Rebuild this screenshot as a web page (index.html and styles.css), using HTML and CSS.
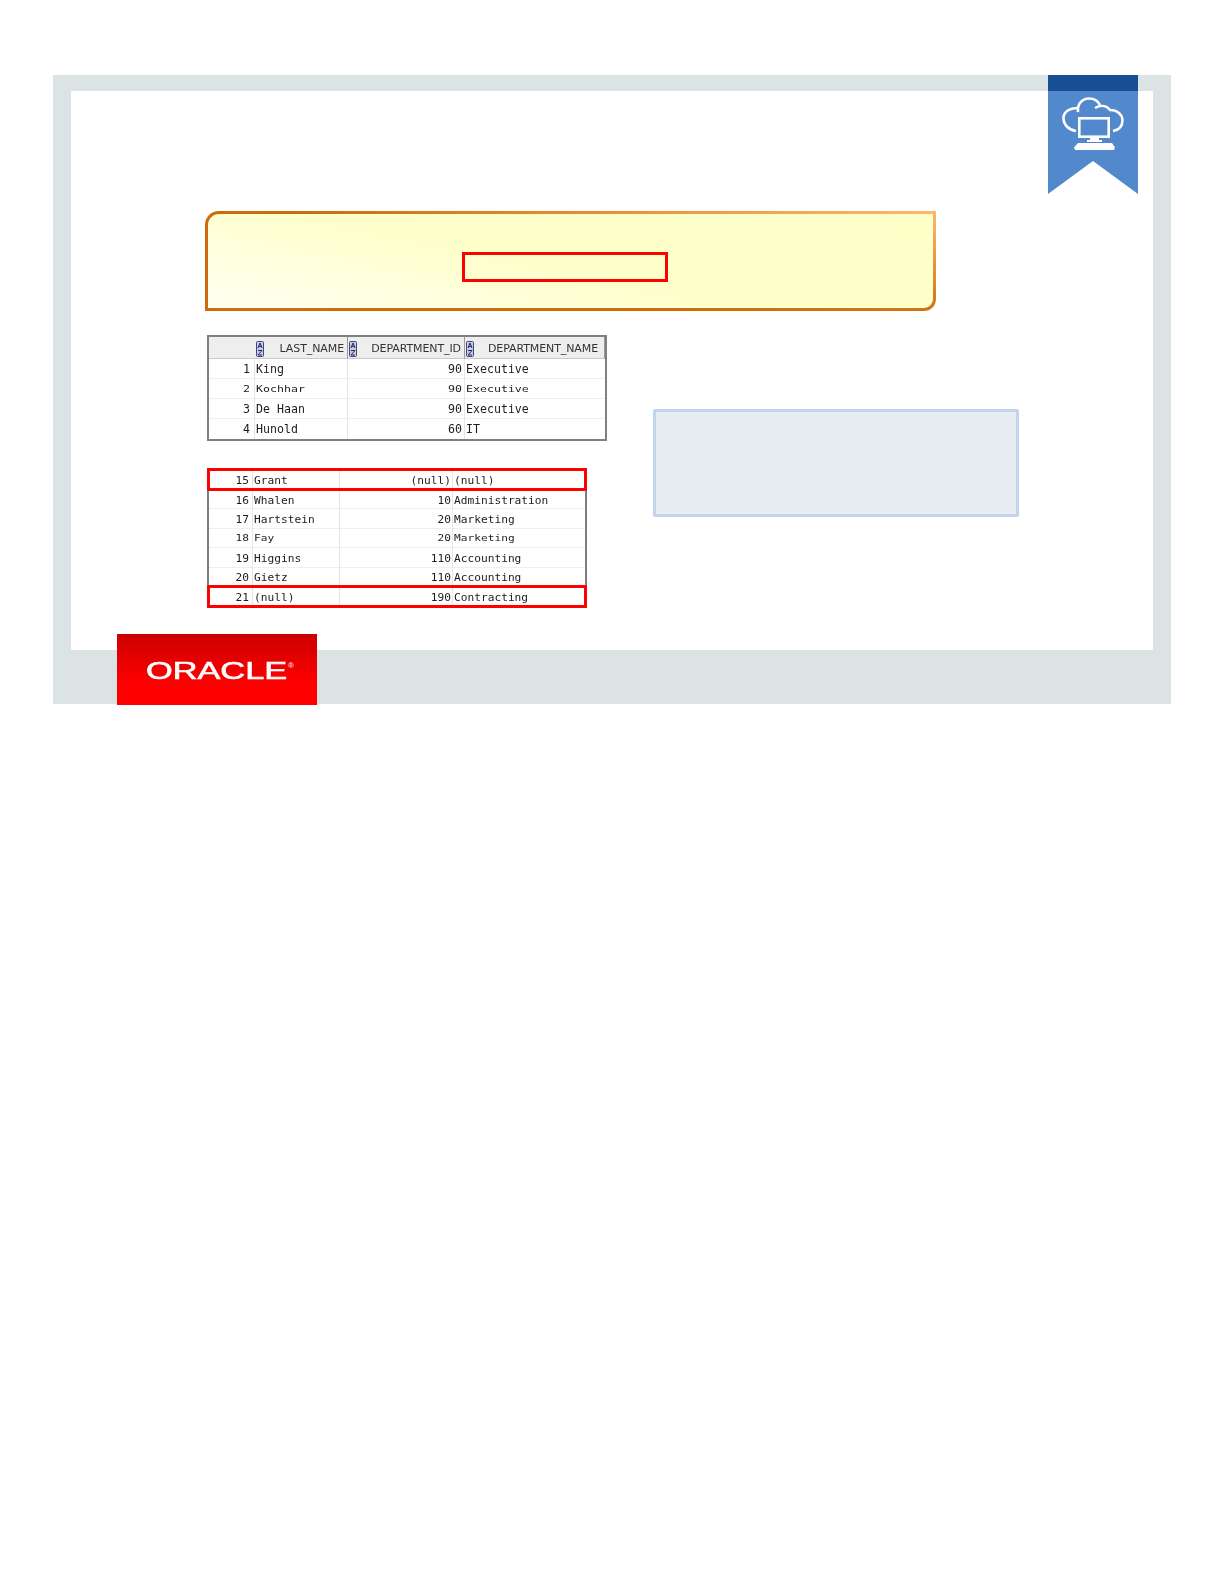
FILE: index.html
```html
<!DOCTYPE html>
<html lang="en">
<head>
<meta charset="utf-8">
<title>Oracle slide</title>
<link rel="stylesheet" href="styles.css">
</head>
<body>
<div class="frame">
  <div class="slide">
    <div class="query"><div class="query-mark"></div></div>
    <div class="content">
      <div class="tables">
        <table class="grid first">
          <colgroup><col class="c1a"><col class="c2a"><col class="c3a"><col class="c4a"></colgroup>
          <thead>
            <tr>
              <th class="corner"></th>
              <th><span class="head"><svg class="sort" viewBox="0 0 8 16"><rect x="0.5" y="0.5" width="7" height="15" rx="1" fill="#c9cbe2" stroke="#3f4680"/><path d="M2 7 4 2 6 7M2.7 5.4H5.3M2 9.5H6L2 14H6" fill="none" stroke="#23285e" stroke-width="1"/></svg><span>LAST_NAME</span></span></th>
              <th><span class="head"><svg class="sort" viewBox="0 0 8 16"><rect x="0.5" y="0.5" width="7" height="15" rx="1" fill="#c9cbe2" stroke="#3f4680"/><path d="M2 7 4 2 6 7M2.7 5.4H5.3M2 9.5H6L2 14H6" fill="none" stroke="#23285e" stroke-width="1"/></svg><span>DEPARTMENT_ID</span></span></th>
              <th class="last-head"><span class="head"><svg class="sort" viewBox="0 0 8 16"><rect x="0.5" y="0.5" width="7" height="15" rx="1" fill="#c9cbe2" stroke="#3f4680"/><path d="M2 7 4 2 6 7M2.7 5.4H5.3M2 9.5H6L2 14H6" fill="none" stroke="#23285e" stroke-width="1"/></svg><span>DEPARTMENT_NAME</span></span></th>
            </tr>
          </thead>
          <tbody>
            <tr><td class="num">1</td><td>King</td><td class="num">90</td><td>Executive</td></tr>
            <tr class="squash"><td class="num"><span>2</span></td><td><span>Kochhar</span></td><td class="num"><span>90</span></td><td><span>Executive</span></td></tr>
            <tr><td class="num">3</td><td>De Haan</td><td class="num">90</td><td>Executive</td></tr>
            <tr><td class="num">4</td><td>Hunold</td><td class="num">60</td><td>IT</td></tr>
          </tbody>
        </table>
        <table class="grid second">
          <colgroup><col class="c1b"><col class="c2b"><col class="c3b"><col class="c4b"></colgroup>
          <tbody>
            <tr class="flag-first"><td class="num">15</td><td>Grant</td><td class="num">(null)</td><td>(null)</td></tr>
            <tr><td class="num">16</td><td>Whalen</td><td class="num">10</td><td>Administration</td></tr>
            <tr><td class="num">17</td><td>Hartstein</td><td class="num">20</td><td>Marketing</td></tr>
            <tr class="squash"><td class="num"><span>18</span></td><td><span>Fay</span></td><td class="num"><span>20</span></td><td><span>Marketing</span></td></tr>
            <tr><td class="num">19</td><td>Higgins</td><td class="num">110</td><td>Accounting</td></tr>
            <tr><td class="num">20</td><td>Gietz</td><td class="num">110</td><td>Accounting</td></tr>
            <tr class="flag-last"><td class="num">21</td><td>(null)</td><td class="num">190</td><td>Contracting</td></tr>
          </tbody>
        </table>
        <div class="mark mark-top"></div>
        <div class="mark mark-bottom"></div>
      </div>
      <div class="callout"></div>
    </div>
  </div>
  <div class="ribbon">
    <div class="ribbon-band"></div>
    <svg class="ribbon-icon" viewBox="0 0 90 103">
      <path d="M0 0H90V103L45 70 0 103Z" fill="#5289cc"/>
      <g fill="none" stroke="#fff" stroke-width="2.6">
        <path d="M30 17C21 17 15.5 21 15.5 27 15.5 34 21 39 28 40"/>
        <path d="M30 21C29 12 35 7.5 41 7.5 46 7.5 50 10 52 14"/>
        <path d="M47 17C52 14 58 14 62 19 69 19 74 23 74.5 29 74.5 35 71 39 65 40"/>
        <rect x="31.3" y="27.3" width="29.4" height="18.4"/>
      </g>
      <path d="M42 47H51V49H54V51H39V49H42Z" fill="#fff"/>
      <path d="M30 52H64L67 56.5 66 59H27L26 56.5Z" fill="#fff"/>
    </svg>
  </div>
  <div class="logo"><span class="logo-text">ORACLE</span><span class="logo-reg">®</span></div>
</div>
</body>
</html>
```
FILE: styles.css
```css
* { box-sizing: border-box; }
html, body { margin: 0; padding: 0; background: #fff; }
body { height: 1584px; }

.frame {
  position: relative;
  width: 1118px;
  height: 629px;
  margin: 75px 0 0 53px;
  padding: 16px 18px 54px;
  background: #dce3e5;
}
.slide {
  height: 559px;
  padding: 120px 0 0 134px;
  background: #fff;
}

.query {
  width: 731px;
  height: 100px;
  padding: 38px 0 0 254px;
  border: 3px solid transparent;
  border-radius: 14px 0 12px 0;
  background:
    linear-gradient(12deg, #fffff2 0%, #ffffcc 45%, #ffffc8 100%) padding-box,
    radial-gradient(ellipse 640px 110px at 100% 0, #ffb870 0%, #cc6c0a 100%) border-box;
}
.query-mark {
  width: 206px;
  height: 30px;
  border: 3px solid #f00;
}

.content {
  display: flex;
  margin-top: 24px;
  padding-left: 2px;
}
.tables {
  position: relative;
  width: 400px;
}
.callout {
  width: 366px;
  height: 108px;
  margin: 74px 0 0 46px;
  border: 3px solid #c2d4eb;
  border-radius: 2px;
  background: #e7edf0;
}

.grid {
  table-layout: fixed;
  border-collapse: separate;
  border-spacing: 0;
  font: 11.6px/1 "DejaVu Sans Mono", monospace;
  color: #1c1c1c;
  background: #fff;
  filter: blur(.35px);
}
.grid td {
  padding: 2px 2px 0 1px;
  border-bottom: 1px solid #efefef;
  border-right: 1px solid #e6e6e6;
  white-space: nowrap;
}
.grid td:last-child { border-right: 0; }
.grid td.num { text-align: right; }
.grid td:first-child { padding-right: 4px; }
.grid tr:last-child td { border-bottom: 0; }
.squash td span { display: inline-block; transform: scaleY(.72); }

.first {
  width: 400px;
  height: 106px;
  border: 2px solid #808080;
}
.first thead tr { height: 22px; }
.first tbody tr { height: 20px; }
.first th {
  padding: 2px 3px 0 1px;
  background: #eeeeee;
  border-bottom: 1px solid #c9c9c9;
  border-right: 1px solid #9a9a9a;
  font: 400 11px/1 "DejaVu Sans", sans-serif;
  color: #333;
}
.first .last-head { padding-right: 6px; }
.first .corner { border-right: 0; }
.head {
  display: flex;
  align-items: center;
  justify-content: space-between;
  white-space: nowrap;
  letter-spacing: -.1px;
}
.sort { flex: none; width: 8px; height: 16px; }
.c1a { width: 46px; }
.c2a { width: 93px; }
.c3a { width: 117px; }
.c4a { width: 140px; }

.second {
  width: 380px;
  height: 140px;
  margin-top: 27px;
  border-left: 2px solid #7e7e7e;
  border-right: 2px solid #7e7e7e;
  font-size: 11.2px;
}
.second td { padding-top: 2px; }
.second td:first-child { padding-right: 3px; }
.second td:nth-child(3) { padding-right: 1px; }
.second tr { height: 19.4px; }
.second .flag-first { height: 22px; }
.second .flag-first td { padding-top: 4px; }
.second .flag-last { height: 21px; }
.second .flag-last td { padding-top: 1px; }
.c1b { width: 44px; }
.c2b { width: 87px; }
.c3b { width: 113px; }
.c4b { width: 132px; }

.mark {
  position: absolute;
  left: 0;
  width: 380px;
  height: 23px;
  border: 3px solid #f00;
  border-radius: 1px;
}
.mark-top { top: 133px; }
.mark-bottom { top: 250px; }

.ribbon {
  position: absolute;
  top: 0;
  left: 995px;
  width: 90px;
  height: 119px;
}
.ribbon-band { height: 16px; background: #174f94; }
.ribbon-icon { display: block; width: 90px; height: 103px; }

.logo {
  position: absolute;
  left: 64px;
  top: 559px;
  display: flex;
  align-items: flex-start;
  width: 200px;
  height: 71px;
  padding: 26px 0 0 29px;
  background: linear-gradient(#cc0000, #f00 70%);
  color: #fff;
}
.logo-text {
  display: inline-block;
  width: 97px;
  font: 400 23.5px/1 "Liberation Sans", sans-serif;
  -webkit-text-stroke: .6px #fff;
  transform: scaleX(1.46);
  transform-origin: 0 0;
}
.logo-reg {
  margin: 2px 0 0 45px;
  font: 400 8px/1 "Liberation Sans", sans-serif;
}
```
